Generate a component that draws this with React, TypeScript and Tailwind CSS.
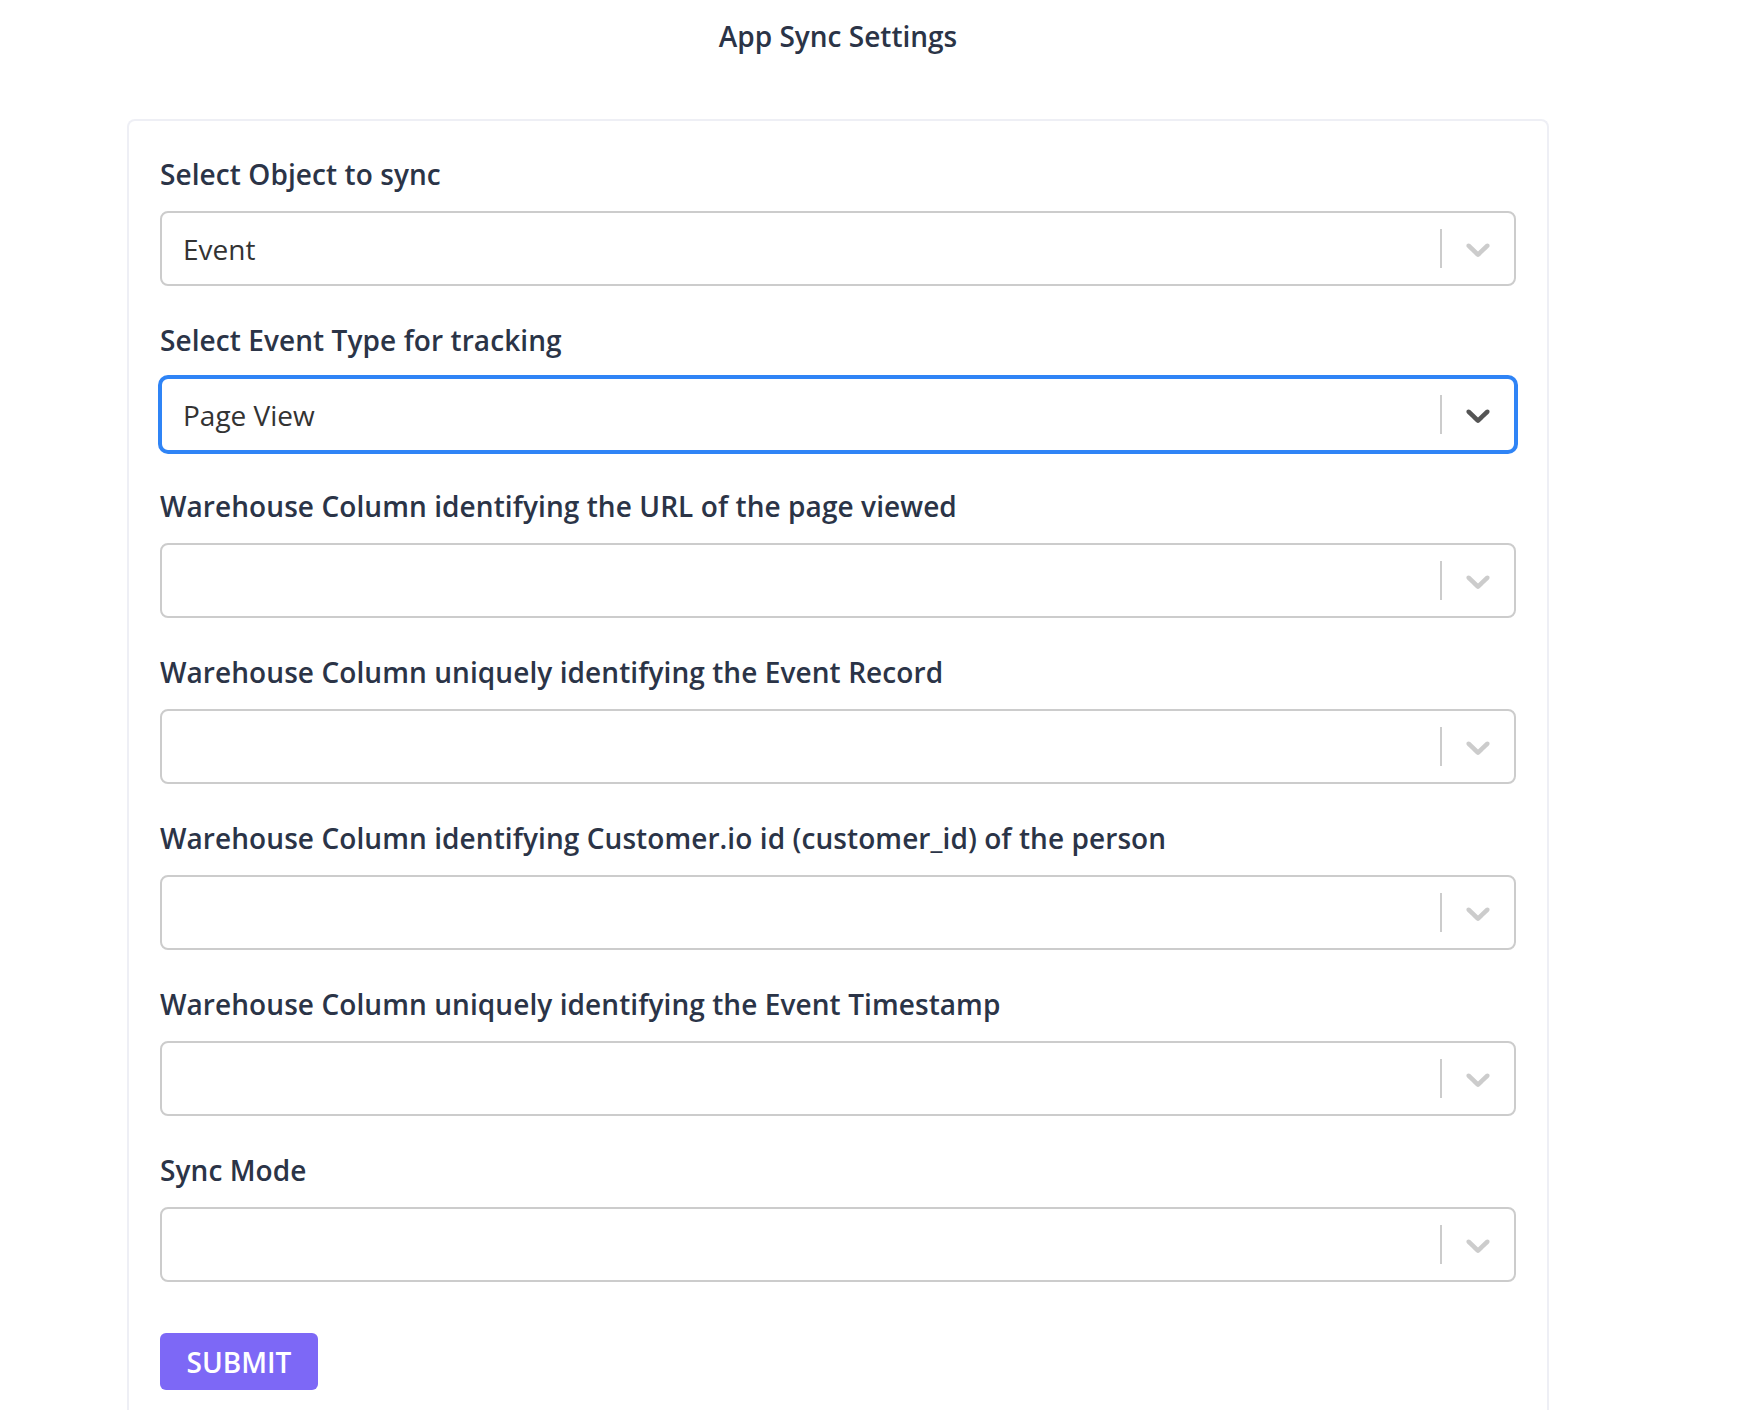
import { useState } from 'react';

const fields = [
  { label: 'Select Object to sync', value: 'Event' },
  { label: 'Select Event Type for tracking', value: 'Page View', focused: true },
  { label: 'Warehouse Column identifying the URL of the page viewed', value: '' },
  { label: 'Warehouse Column uniquely identifying the Event Record', value: '' },
  { label: 'Warehouse Column identifying Customer.io id (customer_id) of the person', value: '' },
  { label: 'Warehouse Column uniquely identifying the Event Timestamp', value: '' },
  { label: 'Sync Mode', value: '' },
];

function Chevron({ dark }: { dark?: boolean }) {
  return (
    <svg width="40" height="40" viewBox="0 0 20 20" className={dark ? 'fill-[#555555]' : 'fill-[#cccccc]'}>
      <path d="M4.516 7.548c0.436-0.446 1.043-0.481 1.576 0l3.908 3.747 3.908-3.747c0.533-0.481 1.141-0.446 1.574 0 0.436 0.445 0.408 1.197 0 1.615-0.406 0.418-4.695 4.502-4.695 4.502-0.217 0.223-0.502 0.335-0.787 0.335s-0.57-0.112-0.789-0.335c0 0-4.287-4.084-4.695-4.502s-0.436-1.17 0-1.615z" />
    </svg>
  );
}

function SelectBox({ value, focused }: { value: string; focused?: boolean }) {
  return (
    <div
      className={
        'flex items-center h-[75px] rounded-lg border-2 bg-white ' +
        (focused ? 'border-[#2f84f6] shadow-[0_0_0_2px_#2f84f6]' : 'border-[#cccccc]')
      }
    >
      <div className="flex-1 pl-[21px] text-[28px] text-[#333333]">{value}</div>
      <div className="w-[2px] h-[39px] bg-[#cccccc]" />
      <div className="w-[72px] flex items-center justify-center">
        <Chevron dark={focused} />
      </div>
    </div>
  );
}

export default function App() {
  const [submitted, setSubmitted] = useState(false);

  return (
    <div className="min-h-[1410px] bg-white font-['Open_Sans',sans-serif] text-[#2b3447]">
      <div className="ml-[127px] w-[1422px]">
        {/* Title */}
        <h1 className="pt-[18px] h-[119px] text-center text-[28px] leading-[36px] font-semibold">App Sync Settings</h1>

        {/* Form card */}
        <div className="border-2 border-b-0 border-[#eeeff5] rounded-t-lg px-[31px] pt-[35px] pb-[20px]">
          <div className="flex flex-col gap-[36px]">
            {fields.map((f) => (
              <div key={f.label}>
                <label className="block mb-[19px] text-[28px] leading-[36px] font-semibold tracking-[0.08px]">{f.label}</label>
                <SelectBox value={f.value} focused={f.focused} />
              </div>
            ))}
          </div>
          <button
            onClick={() => setSubmitted(!submitted)}
            className="mt-[51px] w-[158px] h-[57px] rounded-md bg-[#7d68f6] text-white text-[28px] font-semibold"
          >
            SUBMIT
          </button>
        </div>
      </div>
    </div>
  );
}
